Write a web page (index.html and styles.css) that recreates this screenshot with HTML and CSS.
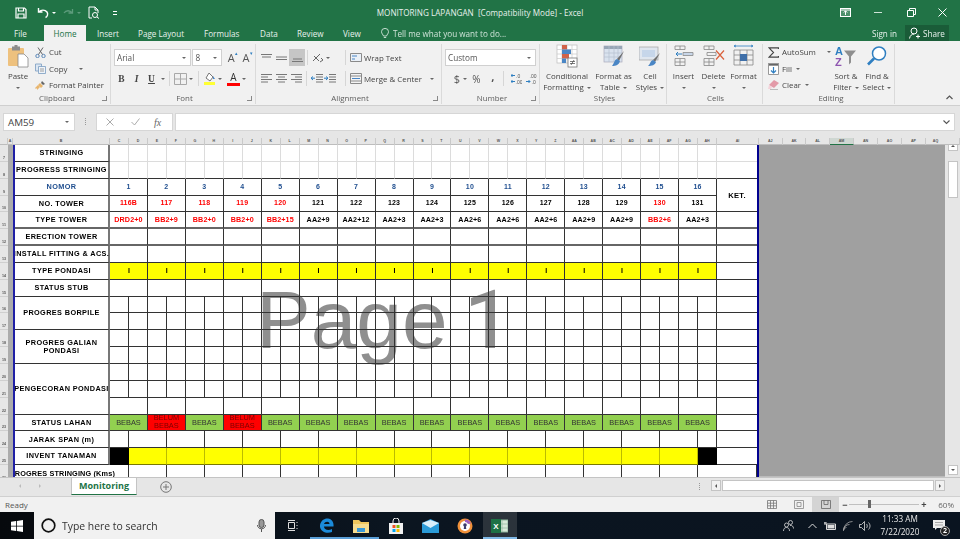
FILE: index.html
```html
<!DOCTYPE html>
<html lang="en">
<head>
<meta charset="utf-8">
<title>MONITORING LAPANGAN - Excel</title>
<link rel="stylesheet" href="styles.css">
</head>
<body>
<div class="app">
  <header class="titlebar">
    <div class="qat">
      <svg class="q1" width="12" height="12" viewBox="0 0 12 12" fill="none" stroke="#fff" stroke-width="1.2"><path d="M1 1h8.500L11 2.500V11H1z"/><path d="M3.500 1v3h5V1M3 11V7h6v4"/></svg>
      <svg class="q2" width="12" height="12" viewBox="0 0 12 12" fill="none" stroke="#fff" stroke-width="1.4"><path d="M1.500 1v4h4M1.800 5C4 2.500 8 2.500 10 5c1.300 2 .5 4.500-1.500 5.500"/></svg>
      <span class="qc"></span>
      <svg class="q3" width="12" height="12" viewBox="0 0 12 12" fill="none" stroke="#5d9c7c" stroke-width="1.3"><path d="M10.500 2v4h-4M10.200 6C8 3 4 3 2 6"/></svg>
      <span class="qc dim"></span>
      <svg class="q4" width="12" height="13" viewBox="0 0 12 13" fill="none" stroke="#fff" stroke-width="1"><path d="M1 12V1h6l3 3v3M7 1v3h3M1 12h3"/><circle cx="7" cy="9" r="2.500"/><path d="M9 11l2 1.500"/></svg>
      <span class="qd"></span>
    </div>
    <div class="doc-title">MONITORING LAPANGAN&nbsp; [Compatibility Mode] - Excel</div>
    <div class="winbtns">
      <svg width="11" height="9" viewBox="0 0 11 9" fill="none" stroke="#fff"><rect x=".5" y=".5" width="10" height="8" fill="#cfe3d8" fill-opacity=".25"/><path d="M5.500 7V3M3.800 4.500l1.700-1.700 1.700 1.700M.5 2h10"/></svg>
      <svg width="8" height="9" viewBox="0 0 8 9" stroke="#cfe3d8"><path d="M0 4.500h8"/></svg>
      <svg width="9" height="9" viewBox="0 0 9 9" fill="none" stroke="#fff"><path d="M.5 2.500h6v6h-6zM2.500 2.500v-2h6v6h-2"/></svg>
      <svg width="9" height="9" viewBox="0 0 9 9" stroke="#fff"><path d="M.5.500l8 8M8.500.500l-8 8"/></svg>
    </div>
  </header>

  <nav class="tabs">
    <span class="tab t-file">File</span>
    <span class="tab t-home">Home</span>
    <span class="tab t-ins">Insert</span>
    <span class="tab t-pl">Page Layout</span>
    <span class="tab t-fo">Formulas</span>
    <span class="tab t-da">Data</span>
    <span class="tab t-re">Review</span>
    <span class="tab t-vi">View</span>
    <svg class="bulb" width="8" height="11" viewBox="0 0 8 11" fill="none" stroke="#d5e6dc" stroke-width=".9"><path d="M2.500 8C2 6.500.5 5.500.5 3.700a3.500 3.300 0 017 0C7.500 5.500 6 6.500 5.500 8zM2.800 9.500h2.400"/></svg>
    <span class="tell">Tell me what you want to do...</span>
    <span class="signin">Sign in</span>
    <span class="share">
      <svg width="11" height="12" viewBox="0 0 11 12" fill="none" stroke="#fff"><circle cx="5" cy="4" r="3"/><path d="M.5 11.500C1 8.500 3 7 5 7M7 9.500h4M9 7.500v4"/></svg>
      Share
    </span>
  </nav>

  <section class="ribbon">
    <div class="group g-clip">
      <div class="gbody">
        <div class="big b-paste">
          <svg class="bigicon" width="22" height="22" viewBox="0 0 22 22"><rect x="1" y="3" width="16" height="18" rx="1" fill="#eec17e"/><rect x="5" y="1.500" width="8" height="4" fill="#8c8c8c"/><rect x="7.500" y="0" width="3" height="3" fill="#8c8c8c"/><path d="M11 9h6l4 4v9H11z" fill="#fff" stroke="#888" stroke-width=".8"/></svg>
          <span class="ln">Paste</span><span class="ln"><b class="car"></b></span>
        </div>
        <div class="smallcol">
          <div class="srow"><svg width="11" height="11" viewBox="0 0 11 11" fill="none" stroke="#5a87b8"><circle cx="2.500" cy="9" r="1.700"/><circle cx="8.500" cy="9" r="1.700"/><path d="M3.500 7.500L8 .5M7.500 7.500L3 .5" stroke="#666"/></svg>Cut</div>
          <div class="srow"><svg width="11" height="11" viewBox="0 0 11 11" fill="#dde7f2" stroke="#7a9cc0" stroke-width=".8"><path d="M.5 1h6v7h-6z"/><path d="M3.500 3.500h7v7h-7z" fill="#eef3f9"/><path d="M5 6h4M5 8h4" stroke="#888"/></svg>Copy<b class="car c-copy"></b></div>
          <div class="srow"><svg width="11" height="11" viewBox="0 0 11 11"><path d="M5 3l3 3-2 2-3-3z" fill="#e8b56d"/><path d="M7 1l3 3-2 1-2-2z" fill="#666"/><path d="M3 5L0 8l1 1 1-1 0 2 3-3z" fill="#e8b56d"/></svg>Format Painter</div>
        </div>
      </div>
      <div class="glabel">Clipboard<i class="launch"></i></div>
    </div>

    <div class="group g-font">
      <div class="gbody col">
        <div class="rrow">
          <span class="sel s-font">Arial<b class="car"></b></span>
          <span class="sel s-size">8<b class="car"></b></span>
          <span class="ab a1">A<sup>▴</sup></span><span class="ab a2">A<sup>▾</sup></span>
        </div>
        <div class="rrow">
          <span class="fb">B</span><span class="fb it">I</span><span class="fb un">U</span><span class="cw"><b class="car"></b></span><i class="sep sp1"></i>
          <svg class="i12" width="13" height="12" viewBox="0 0 13 12" fill="none" stroke="#a8a8a8"><path d="M.5.500h12v11H.5zM6.500.500v11M.5 6h12"/></svg><span class="cw"><b class="car"></b></span><i class="sep sp2"></i>
          <svg class="i12" width="13" height="13" viewBox="0 0 13 13"><path d="M6 1l4 4-3 4-4-3z" fill="#fff" stroke="#777"/><path d="M10 4l2 3h-2z" fill="#4a86c5"/><rect x="1" y="10" width="11" height="3" fill="#ffff33"/></svg><span class="cw"><b class="car"></b></span>
          <span class="colorA">A</span><span class="cw"><b class="car"></b></span>
        </div>
      </div>
      <div class="glabel">Font<i class="launch"></i></div>
    </div>

    <div class="group g-align">
      <div class="gbody col">
        <div class="rrow">
          <span class="al"><svg width="11" height="8" viewBox="0 0 11 8" stroke="#777"><path d="M0 .5h11M1 3h9"/></svg></span>
          <span class="al"><svg width="11" height="8" viewBox="0 0 11 8" stroke="#777"><path d="M0 3h11M0 5.500h11"/></svg></span>
          <span class="al on"><svg width="11" height="8" viewBox="0 0 11 8" stroke="#777"><path d="M1 5h9M0 7.500h11"/></svg></span>
          <i class="sep sp3"></i>
          <svg class="orient" width="12" height="11" viewBox="0 0 12 11" fill="none" stroke="#666"><path d="M1 9L8 2M2 4l5 5M9 6l2 2-3 2"/></svg><span class="cw"><b class="car"></b></span>
          <i class="sep sp4"></i>
          <span class="lnk"><svg width="12" height="11" viewBox="0 0 12 11" fill="#eaf0f7" stroke="#8a8a8a"><path d="M.5 1.500h11v8H.5z"/><path d="M2 4h5M2 7h3" stroke="#4a86c5"/></svg>Wrap Text</span>
        </div>
        <div class="rrow">
          <span class="al"><svg width="11" height="9" viewBox="0 0 11 9" stroke="#777"><path d="M0 .5h11M0 3h7M0 5.500h11M0 8h7"/></svg></span>
          <span class="al"><svg width="11" height="9" viewBox="0 0 11 9" stroke="#777"><path d="M0 .5h11M2 3h7M0 5.500h11M2 8h7"/></svg></span>
          <span class="al"><svg width="11" height="9" viewBox="0 0 11 9" stroke="#777"><path d="M0 .5h11M4 3h7M0 5.500h11M4 8h7"/></svg></span>
          <i class="sep sp3"></i>
          <svg class="ind" width="12" height="9" viewBox="0 0 12 9" stroke="#777"><path d="M5 .5h7M5 3h7M5 5.500h7M5 8h7"/><path d="M4 4.200H0M2 2.500L0 4.200 2 6" stroke="#2f7fc1" fill="none"/></svg>
          <svg class="ind" width="12" height="9" viewBox="0 0 12 9" stroke="#777"><path d="M5 .5h7M5 3h7M5 5.500h7M5 8h7"/><path d="M0 4.200h4M2 2.500l2 1.700L2 6" stroke="#2f7fc1" fill="none"/></svg>
          <i class="sep sp5"></i>
          <span class="lnk"><svg width="12" height="11" viewBox="0 0 12 11" fill="#f4f4f4" stroke="#8a8a8a"><path d="M.5.500h11v10H.5zM.5 3h11M.5 8h11"/><path d="M2 5.500h8" stroke="#4a86c5"/></svg>Merge &amp; Center<b class="car c-merge"></b></span>
        </div>
      </div>
      <div class="glabel">Alignment<i class="launch"></i></div>
    </div>

    <div class="group g-num">
      <div class="gbody col">
        <div class="rrow"><span class="sel s-num">Custom<b class="car"></b></span></div>
        <div class="rrow nrow">
          <span class="nb dollar">$</span><span class="cw"><b class="car"></b></span><span class="nb pct">%</span><span class="nb comma">,</span><i class="sep sp6"></i>
          <span class="dec"><svg width="11" height="11" viewBox="0 0 11 11" fill="none" stroke="#2f7fc1"><path d="M4 2.500H0M1.500 1L0 2.500 1.500 4M4 8.500H0M1.500 7L0 8.500 1.500 10"/><text x="5" y="4.500" class="dtx">.0</text><text x="4.500" y="10.500" class="dtx">.00</text></svg></span>
          <span class="dec"><svg width="11" height="11" viewBox="0 0 11 11" fill="none" stroke="#2f7fc1"><path d="M0 8.500h4M2.500 7L4 8.500 2.500 10"/><text x="3.500" y="4.500" class="dtx">.00</text><text x="5.500" y="10.500" class="dtx">.0</text></svg></span>
        </div>
      </div>
      <div class="glabel">Number<i class="launch"></i></div>
    </div>

    <div class="group g-styles">
      <div class="gbody">
        <div class="big w48">
          <svg class="bigicon" width="22" height="22" viewBox="0 0 22 22"><rect x="1" y="0" width="20" height="18" fill="#fff" stroke="#bbb" stroke-width=".7"/><path d="M1 4.500h20M1 9h20M1 13.500h20M6 0v18M11 0v18M16 0v18" stroke="#c8c8c8" stroke-width=".7"/><rect x="6" y="0" width="5" height="4.500" fill="#d16349"/><rect x="6" y="4.500" width="9" height="4.500" fill="#4a86c5"/><rect x="6" y="9" width="7" height="4.500" fill="#d16349"/><rect x="6" y="13.500" width="4" height="4.500" fill="#4a86c5"/><rect x="12" y="13" width="9" height="9" fill="#fff" stroke="#777" stroke-width=".8"/><path d="M14 16.500h5M14 18.500h5M18 15l-3 5" stroke="#444" stroke-width=".7"/></svg>
          <span class="ln">Conditional</span><span class="ln">Formatting<b class="car in"></b></span>
        </div>
        <div class="big w40">
          <svg class="bigicon" width="22" height="22" viewBox="0 0 22 22"><rect x="1" y="1" width="18" height="16" fill="#d9e2ee" stroke="#aab" stroke-width=".7"/><rect x="1" y="1" width="18" height="3" fill="#98a6b6"/><path d="M1 8h18M1 12h18M6 1v16M11 1v16M15 1v16" stroke="#b4c0cf" stroke-width=".7"/><path d="M21 6l-7 8 2 2z" fill="#6f6f6f"/><path d="M14 14c-3 1-2 3-5 7 4 0 7-1 8-5z" fill="#4a86c5"/></svg>
          <span class="ln">Format as</span><span class="ln">Table<b class="car in"></b></span>
        </div>
        <div class="big w30">
          <svg class="bigicon" width="22" height="22" viewBox="0 0 22 22"><rect x="0" y="2" width="19" height="13" fill="#dfe6ef" stroke="#aaa" stroke-width=".8"/><rect x="3" y="5" width="13" height="7" fill="#c6d6ea"/><path d="M21 8l-7 7 2 2z" fill="#6f6f6f"/><path d="M14 15c-3 1-2 3-5 6 4 0 7-1 8-4z" fill="#4a86c5"/></svg>
          <span class="ln">Cell</span><span class="ln">Styles<b class="car in"></b></span>
        </div>
      </div>
      <div class="glabel">Styles</div>
    </div>

    <div class="group g-cells">
      <div class="gbody">
        <div class="big w28">
          <svg class="bigicon" width="20" height="21" viewBox="0 0 20 21" fill="none" stroke="#888" stroke-width=".8"><path d="M1 .5h10v3.500H1zM6 .5v3.500M1 13h10v7H1zM1 16.500h10M6 13v7"/><path d="M9 7h10v3H9z" fill="#c8d6e8"/><path d="M8 8.500H2M4 6.500l-2 2 2 2" stroke="#2f7fc1" stroke-width="1"/></svg>
          <span class="ln">Insert</span><span class="ln"><b class="car"></b></span>
        </div>
        <div class="big w29">
          <svg class="bigicon" width="22" height="21" viewBox="0 0 22 21" fill="none" stroke="#888" stroke-width=".8"><path d="M1 .5h10v3.500H1zM6 .5v3.500M1 13h10v7H1zM1 16.500h10M6 13v7M4 7h9v3H4z"/><path d="M13 5l8 9M21 5l-8 9" stroke="#d9603b" stroke-width="1.200"/></svg>
          <span class="ln">Delete</span><span class="ln"><b class="car"></b></span>
        </div>
        <div class="big w29">
          <svg class="bigicon" width="21" height="22" viewBox="0 0 21 22" fill="none" stroke="#888" stroke-width=".8"><path d="M1 5h19v15H1zM1 10h19M1 15h19M7 5v15M14 5v15"/><rect x="7" y="9" width="7" height="7" fill="#3f6fa8" stroke="none"/><path d="M1 1h19M3 0l-2 1 2 1M18 0l2 1-2 1" stroke="#2f7fc1"/></svg>
          <span class="ln">Format</span><span class="ln"><b class="car"></b></span>
        </div>
      </div>
      <div class="glabel">Cells</div>
    </div>

    <div class="group g-edit">
      <div class="gbody">
        <div class="smallcol s-edit">
          <div class="srow"><svg width="11" height="11" viewBox="0 0 11 11" fill="none" stroke="#444" stroke-width="1.200"><path d="M10.500 2V.8H1L5.500 5.500 1 10.200h9.500V9"/></svg>AutoSum<b class="car c-sum"></b></div>
          <div class="srow"><svg width="11" height="12" viewBox="0 0 11 12" fill="#fff" stroke="#999"><path d="M.5.500h10v11H.5z"/><path d="M.5.500h10v2H.5z" fill="#666"/><path d="M5.500 4v6M3 7.500l2.500 2.500L8 7.500" stroke="#2f7fc1" fill="none" stroke-width="1.200"/></svg>Fill<b class="car in"></b></div>
          <div class="srow"><svg width="11" height="10" viewBox="0 0 11 10"><path d="M6 0l5 3-5 5-5-3z" fill="#e39aa8"/><path d="M1 5l3 2-1 2H0z" fill="#f4d3da"/><path d="M2 9.500h8" stroke="#bbb"/></svg>Clear<b class="car in"></b></div>
        </div>
        <div class="big w30 b-sort">
          <svg class="bigicon" width="22" height="21" viewBox="0 0 22 21"><text x="0" y="9" class="az1">A</text><text x="0" y="20" class="az2">Z</text><path d="M9 5h12l-5 6v6l-2 2v-8z" fill="#8f8f8f"/></svg>
          <span class="ln">Sort &amp;</span><span class="ln">Filter<b class="car in"></b></span>
        </div>
        <div class="big w30">
          <svg class="bigicon" width="22" height="21" viewBox="0 0 22 21" fill="none"><circle cx="13" cy="8" r="6.500" stroke="#2f7fc1" stroke-width="1.500" fill="#fff"/><path d="M8 13l-6 6" stroke="#2f7fc1" stroke-width="2.600"/></svg>
          <span class="ln">Find &amp;</span><span class="ln">Select<b class="car in"></b></span>
        </div>
      </div>
      <div class="glabel">Editing</div>
    </div>
    <div class="collapse"><svg width="7" height="5" viewBox="0 0 7 5" fill="none" stroke="#555" stroke-width="1.200"><path d="M.5 4l3-3 3 3"/></svg></div>
  </section>

  <section class="formula">
    <div class="namebox">AM59<b class="car"></b></div>
    <span class="fdots"></span>
    <div class="fxbox">
      <svg width="8" height="8" viewBox="0 0 8 8" stroke="#aaa" stroke-width="1"><path d="M.5.500l7 7M7.500.500l-7 7"/></svg>
      <svg width="9" height="8" viewBox="0 0 9 8" stroke="#aaa" fill="none" stroke-width="1"><path d="M.5 4l3 3 5-6.500"/></svg>
      <span class="fx">fx</span>
    </div>
    <div class="finput"><svg width="7" height="5" viewBox="0 0 7 5" fill="none" stroke="#555" stroke-width="1.100"><path d="M.5.500l3 3 3-3"/></svg></div>
  </section>

  <div class="colheads">
    <span class="corner"></span><span class="ch-a">A</span><span class="ch-b">B</span>
    <span>C</span><span>D</span><span>E</span><span>F</span><span>G</span><span>H</span><span>I</span><span>J</span>
    <span>K</span><span>L</span><span>M</span><span>N</span><span>O</span><span>P</span><span>Q</span><span>R</span>
    <span>S</span><span>T</span><span>U</span><span>V</span><span>W</span><span>X</span><span>Y</span><span>Z</span>
    <span>AA</span><span>AB</span><span>AC</span><span>AD</span><span>AE</span><span>AF</span><span>AG</span><span>AH</span>
    <span class="ch-ai">AI</span>
    <span class="ch-r">AJ</span><span class="ch-r">AK</span><span class="ch-r">AL</span><span class="ch-r sel-col">AM</span><span class="ch-r">AN</span><span class="ch-r">AO</span><span class="ch-r">AP</span><span class="ch-q">AQ</span>
    <span class="ch-sb"></span>
  </div>

  <main class="sheetarea">
    <div class="rowheads">
      <span>7</span><span>8</span><span>9</span><span>10</span><span>11</span><span>12</span><span>13</span><span>14</span><span>15</span><span>16</span>
      <span>17</span><span>18</span><span>19</span><span>20</span><span>21</span><span>22</span><span>23</span><span>24</span><span>25</span><span>26</span>
    </div>
    <div class="acol"></div>
    <div class="page">
      <div class="watermark">Page <span class="wm-one">1</span></div>
      <div class="sheet">
        <div class="row light"><b class="lab">STRINGING</b>
          <i></i><i></i><i></i><i></i><i></i><i></i><i></i><i></i><i></i><i></i><i></i><i></i><i></i><i></i><i></i><i></i>
          <i></i><i></i><i></i><i></i><i></i><i></i><i></i><i></i><i></i><i></i><i></i><i></i><i></i><i></i><i></i><i></i><i class="ket"></i></div>
        <div class="row light dk"><b class="lab">PROGRESS STRINGING</b>
          <i></i><i></i><i></i><i></i><i></i><i></i><i></i><i></i><i></i><i></i><i></i><i></i><i></i><i></i><i></i><i></i>
          <i></i><i></i><i></i><i></i><i></i><i></i><i></i><i></i><i></i><i></i><i></i><i></i><i></i><i></i><i></i><i></i><i class="ket"></i></div>
        <div class="row pair blue"><b class="lab">NOMOR</b>
          <i>1</i><i>2</i><i>3</i><i>4</i><i>5</i><i>6</i><i>7</i><i>8</i><i>9</i><i>10</i><i>11</i><i>12</i><i>13</i><i>14</i><i>15</i><i>16</i>
          <i class="ket ket-merged">KET.</i></div>
        <div class="row pair bold"><b class="lab">NO. TOWER</b>
          <i class="red">116B</i><i class="red">117</i><i class="red">118</i><i class="red">119</i><i class="red">120</i><i>121</i><i>122</i><i>123</i><i>124</i><i>125</i><i>126</i><i>127</i><i>128</i><i>129</i><i class="red">130</i><i>131</i></div>
        <div class="row pair bold wide thick"><b class="lab">TYPE TOWER</b>
          <i class="red">DRD2+0</i><i class="red">BB2+9</i><i class="red">BB2+0</i><i class="red">BB2+0</i><i class="red">BB2+15</i><i>AA2+9</i><i>AA2+12</i><i>AA2+3</i><i>AA2+3</i><i>AA2+6</i><i>AA2+6</i><i>AA2+6</i><i>AA2+9</i><i>AA2+9</i><i class="red">BB2+6</i><i>AA2+3</i><i class="ket"></i></div>
        <div class="row pair thick"><b class="lab">ERECTION TOWER</b>
          <i></i><i></i><i></i><i></i><i></i><i></i><i></i><i></i><i></i><i></i><i></i><i></i><i></i><i></i><i></i><i></i><i class="ket"></i></div>
        <div class="row pair"><b class="lab">INSTALL FITTING &amp; ACS.</b>
          <i></i><i></i><i></i><i></i><i></i><i></i><i></i><i></i><i></i><i></i><i></i><i></i><i></i><i></i><i></i><i></i><i class="ket"></i></div>
        <div class="row pair yellow bold"><b class="lab">TYPE PONDASI</b>
          <i>I</i><i>I</i><i>I</i><i>I</i><i>I</i><i>I</i><i>I</i><i>I</i><i>I</i><i>I</i><i>I</i><i>I</i><i>I</i><i>I</i><i>I</i><i>I</i><i class="ket"></i></div>
        <div class="row pair"><b class="lab">STATUS STUB</b>
          <i></i><i></i><i></i><i></i><i></i><i></i><i></i><i></i><i></i><i></i><i></i><i></i><i></i><i></i><i></i><i></i><i class="ket"></i></div>
        <div class="row"><b class="lab r2">PROGRES BORPILE</b>
          <i></i><i></i><i></i><i></i><i></i><i></i><i></i><i></i><i></i><i></i><i></i><i></i><i></i><i></i><i></i><i></i>
          <i></i><i></i><i></i><i></i><i></i><i></i><i></i><i></i><i></i><i></i><i></i><i></i><i></i><i></i><i></i><i></i><i class="ket"></i></div>
        <div class="row">
          <i></i><i></i><i></i><i></i><i></i><i></i><i></i><i></i><i></i><i></i><i></i><i></i><i></i><i></i><i></i><i></i>
          <i></i><i></i><i></i><i></i><i></i><i></i><i></i><i></i><i></i><i></i><i></i><i></i><i></i><i></i><i></i><i></i><i class="ket"></i></div>
        <div class="row"><b class="lab r2">PROGRES GALIAN<br>PONDASI</b>
          <i></i><i></i><i></i><i></i><i></i><i></i><i></i><i></i><i></i><i></i><i></i><i></i><i></i><i></i><i></i><i></i>
          <i></i><i></i><i></i><i></i><i></i><i></i><i></i><i></i><i></i><i></i><i></i><i></i><i></i><i></i><i></i><i></i><i class="ket"></i></div>
        <div class="row">
          <i></i><i></i><i></i><i></i><i></i><i></i><i></i><i></i><i></i><i></i><i></i><i></i><i></i><i></i><i></i><i></i>
          <i></i><i></i><i></i><i></i><i></i><i></i><i></i><i></i><i></i><i></i><i></i><i></i><i></i><i></i><i></i><i></i><i class="ket"></i></div>
        <div class="row"><b class="lab r3">PENGECORAN PONDASI</b>
          <i></i><i></i><i></i><i></i><i></i><i></i><i></i><i></i><i></i><i></i><i></i><i></i><i></i><i></i><i></i><i></i>
          <i></i><i></i><i></i><i></i><i></i><i></i><i></i><i></i><i></i><i></i><i></i><i></i><i></i><i></i><i></i><i></i><i class="ket"></i></div>
        <div class="row">
          <i></i><i></i><i></i><i></i><i></i><i></i><i></i><i></i><i></i><i></i><i></i><i></i><i></i><i></i><i></i><i></i>
          <i></i><i></i><i></i><i></i><i></i><i></i><i></i><i></i><i></i><i></i><i></i><i></i><i></i><i></i><i></i><i></i><i class="ket"></i></div>
        <div class="row pair">
          <i></i><i></i><i></i><i></i><i></i><i></i><i></i><i></i><i></i><i></i><i></i><i></i><i></i><i></i><i></i><i></i><i class="ket"></i></div>
        <div class="row pair lahan"><b class="lab">STATUS LAHAN</b>
          <i>BEBAS</i><i class="no">BELUM BEBAS</i><i>BEBAS</i><i class="no">BELUM BEBAS</i><i>BEBAS</i><i>BEBAS</i><i>BEBAS</i><i>BEBAS</i><i>BEBAS</i><i>BEBAS</i><i>BEBAS</i><i>BEBAS</i><i>BEBAS</i><i>BEBAS</i><i>BEBAS</i><i>BEBAS</i><i class="ket"></i></div>
        <div class="row off"><b class="lab">JARAK SPAN (m)</b>
          <i class="one"></i><i></i><i></i><i></i><i></i><i></i><i></i><i></i><i></i><i></i><i></i><i></i><i></i><i></i><i></i><i></i><i class="one"></i><i class="ket"></i></div>
        <div class="row off invent"><b class="lab">INVENT TANAMAN</b>
          <i class="one blk"></i><i></i><i></i><i></i><i></i><i></i><i></i><i></i><i></i><i></i><i></i><i></i><i></i><i></i><i></i><i></i><i class="one blk"></i><i class="ket"></i></div>
        <div class="row off"><b class="lab lab-over">PROGRES STRINGING (Kms)</b>
          <i></i><i></i><i></i><i></i><i></i><i></i><i></i><i></i><i></i><i></i><i></i><i></i><i></i><i></i><i></i><i></i><i class="one"></i><i class="ket"></i></div>
      </div>
    </div>
    <div class="outside"></div>
    <aside class="vscroll">
      <span class="sbtn"><b class="up"></b></span>
      <span class="vthumb"></span>
      <span class="sbtn btm"><b class="down"></b></span>
    </aside>
  </main>

  <div class="tabbar">
    <span class="nav"><b class="left"></b></span>
    <span class="nav"><b class="right"></b></span>
    <span class="sheettab">Monitoring</span>
    <svg class="plus" width="12" height="12" viewBox="0 0 12 12" fill="none" stroke="#777"><circle cx="6" cy="6" r="5.300"/><path d="M6 3v6M3 6h6"/></svg>
    <span class="tabdots"></span>
    <div class="hscroll">
      <span class="hbtn"><b class="left dk2"></b></span>
      <span class="hthumb"></span>
      <span class="hbtn"><b class="right dk2"></b></span>
    </div>
  </div>

  <footer class="statusbar">
    <span class="ready">Ready</span>
    <div class="views">
      <span class="vw"><svg width="10" height="9" viewBox="0 0 10 9" fill="none" stroke="#777" stroke-width=".8"><path d="M.5.500h9v8h-9zM.5 3.200h9M.5 5.800h9M3.500.500v8M6.500.500v8"/></svg></span>
      <span class="vw"><svg width="10" height="9" viewBox="0 0 10 9" fill="none" stroke="#888" stroke-width=".8"><path d="M.5.500h9v8h-9zM3 2.500h4v4H3z"/></svg></span>
      <span class="vw act"><svg width="10" height="9" viewBox="0 0 10 9" fill="none" stroke="#666" stroke-width=".8"><path d="M.5.500h9v8h-9zM3 .5v4h4v-4"/></svg></span>
    </div>
    <span class="zm">−</span>
    <span class="slider"><i class="thumb"></i></span>
    <span class="zm zp">+</span>
    <span class="pctz">60%</span>
  </footer>

  <div class="taskbar">
    <span class="start"><svg width="12" height="12" viewBox="0 0 12 12" fill="#fff"><path d="M0 1.700L5 1v4.700H0zM5.800.900L12 0v5.700H5.800zM0 6.400h5V11l-5-.7zM5.800 6.400H12V12l-6.200-.9z"/></svg></span>
    <div class="search">
      <svg width="15" height="15" viewBox="0 0 15 15" fill="none" stroke="#111" stroke-width="1.700"><circle cx="7.500" cy="7.500" r="6.300"/></svg>
      <span class="stext">Type here to search</span>
      <svg class="mic" width="9" height="13" viewBox="0 0 9 13" fill="none" stroke="#555"><rect x="2" y=".5" width="5" height="8" rx="2.500" fill="#999"/><path d="M.5 6c0 5 8 5 8 0M4.500 10v3"/></svg>
    </div>
    <div class="apps">
      <span class="app-i w35"><svg width="12" height="11" viewBox="0 0 12 11" fill="none" stroke="#ddd"><path d="M2.500 2.500h6v6h-6zM2 .5h7M2 10.500h7"/><path d="M11 2v1M11 5v1M11 8v1"/></svg></span>
      <span class="app-i w35 on"><svg width="15" height="15" viewBox="0 0 15 15"><path d="M1 7C2 2 6 0 9 .5c4 .5 6 4 5.500 8H5c0 3 4 4.500 8 2.500v3c-5 2-11 0-12-5 0-1 0-2 0-2zM5 6h5.500C10.500 3 6 3 5 6z" fill="#1b8ad9"/></svg></span>
      <span class="app-i w35 on"><svg width="16" height="14" viewBox="0 0 16 14"><path d="M0 1h6l2 2h8v11H0z" fill="#f0c75e"/><rect x="0" y="5" width="16" height="9" fill="#f7dd8f"/><rect x="4" y="9" width="8" height="4" fill="#3a9ad9"/></svg></span>
      <span class="app-i w35"><svg width="16" height="16" viewBox="0 0 16 16"><path d="M1 5h14v11H1z" fill="#f2f2f2"/><path d="M5 5V3a3 3 0 016 0v2" fill="none" stroke="#f2f2f2"/><rect x="4.500" y="7" width="3" height="3" fill="#f25022"/><rect x="8.500" y="7" width="3" height="3" fill="#7fba00"/><rect x="4.500" y="11" width="3" height="3" fill="#00a4ef"/><rect x="8.500" y="11" width="3" height="3" fill="#ffb900"/></svg></span>
      <span class="app-i w35"><svg width="17" height="14" viewBox="0 0 17 14"><path d="M0 4l8.500-4L17 4v10H0z" fill="#2a9bd8"/><path d="M0 4l8.500 5L17 4l-8.500-3z" fill="#d9effa"/></svg></span>
      <span class="app-i w35"><svg width="16" height="16" viewBox="0 0 16 16"><circle cx="8" cy="8" r="7.500" fill="#f0913a"/><circle cx="8" cy="8" r="5" fill="#fff"/><path d="M8 1.500a6.500 6.500 0 016 4L11 6a3.500 3.500 0 00-3-2z" fill="#a05fc0"/><circle cx="8" cy="7" r="1.800" fill="#3a3a6a"/><path d="M7.200 8h1.600l.5 3H6.700z" fill="#3a3a6a"/></svg></span>
      <span class="app-x"><svg width="17" height="14" viewBox="0 0 17 14"><rect x="6" y="1" width="11" height="12" fill="#d9ead9" stroke="#8fb59e"/><path d="M11 1v12M6 5h11M6 9h11" stroke="#8fb59e" stroke-width=".7"/><rect x="0" y="0" width="10" height="14" fill="#1e7145"/><text x="2.200" y="10" class="xl">X</text></svg></span>
    </div>
    <div class="tray">
      <svg class="t-ppl" width="11" height="11" viewBox="0 0 11 11" fill="none" stroke="#ddd" stroke-width=".8"><circle cx="3.500" cy="5" r="2"/><path d="M.5 11c0-2 1-3.500 3-3.500S6.500 9 6.500 11"/><circle cx="7.500" cy="2.500" r="2"/><path d="M7 5.500c2-.5 3.500 1 3.500 3"/></svg>
      <svg class="t-up" width="9" height="6" viewBox="0 0 9 6" fill="none" stroke="#ddd" stroke-width="1"><path d="M.5 5l4-4 4 4"/></svg>
      <svg class="t-bat" width="12" height="8" viewBox="0 0 12 8" fill="none" stroke="#ddd"><path d="M2.500 2h9v5.500h-9z"/><rect x="4" y="3.500" width="6" height="2.500" fill="#ddd"/><path d="M0 1h3M1 0v3"/></svg>
      <svg class="t-wifi" width="10" height="10" viewBox="0 0 10 10" fill="none" stroke="#aaa" stroke-width=".8"><path d="M.5 9.500a9 9 0 019-9M.5 9.500a6 6 0 016-6M.5 9.500a3 3 0 013-3"/></svg>
      <svg class="t-vol" width="12" height="10" viewBox="0 0 12 10" fill="none" stroke="#ddd" stroke-width=".8"><path d="M.5 3.500h2L5.500.5v9l-3-3h-2zM7.500 3c1 1 1 3 0 4M9.500 1.500c2 2 2 5 0 7"/></svg>
      <div class="clock"><span>11:33 AM</span><span>7/22/2020</span></div>
      <span class="action"><svg width="12" height="11" viewBox="0 0 12 11"><path d="M0 0h12v8H4L2 10V8H0z" fill="#eee"/><path d="M2 2.500h8M2 5h8" stroke="#888" stroke-width=".7"/></svg><i class="badge">2</i></span>
    </div>
  </div>
</div>
</body>
</html>
```
FILE: styles.css
```css
* { box-sizing: border-box; }
html, body { margin: 0; padding: 0; background: #e6e6e6; }
body { width: 960px; height: 539px; overflow: hidden; font-family: "Open Sans", "Liberation Sans", sans-serif; }
i, b { font-style: normal; }
.app { width: 960px; height: 539px; display: flex; flex-direction: column; overflow: hidden; filter: blur(.35px); }

/* title bar */
.titlebar { height: 25px; background: #217346; color: #e8f1ec; display: grid; grid-template-columns: 1fr auto 1fr; align-items: center; font-size: 8.150px; }
.qat { display: flex; align-items: center; padding-left: 15px; }
.q2 { margin-left: 10px; }
.qc { width: 0; height: 0; margin-left: 3px; border: 2px solid transparent; border-top: 2.500px solid #fff; border-bottom: 0; }
.qc.dim { border-top-color: #5d9c7c; }
.q3 { margin-left: 6px; }
.q4 { margin-left: 7px; }
.qd { width: 4px; height: 4px; margin-left: 13px; border-top: 1px solid #fff; border-bottom: 1px solid #fff; }
.doc-title { padding-bottom: 1px; }
.winbtns { display: flex; justify-content: flex-end; align-items: center; gap: 0; padding-right: 13px; }
.winbtns svg:nth-child(2) { margin-left: 23px; }
.winbtns svg:nth-child(3) { margin-left: 25px; }
.winbtns svg:nth-child(4) { margin-left: 22px; }

/* ribbon tabs */
.tabs { height: 16px; background: #217346; color: #e8f1ec; display: flex; align-items: center; font-size: 8.150px; position: relative; }
.tab { white-space: nowrap; }
.t-file { margin-left: 14px; width: 14px; }
.t-home { margin-left: 16px; width: 42px; height: 17px; align-self: flex-end; background: #f1f1f1; color: #217346; text-align: center; line-height: 17px; margin-bottom: -1px; }
.t-ins { margin-left: 11px; width: 21px; }
.t-pl { margin-left: 20px; width: 46px; }
.t-fo { margin-left: 20px; width: 35px; }
.t-da { margin-left: 21px; width: 17px; }
.t-re { margin-left: 20px; width: 27px; }
.t-vi { margin-left: 19px; width: 19px; }
.bulb { margin-left: 19px; }
.tell { margin-left: 4px; color: #cfe3d8; }
.signin { margin-left: auto; }
.share { margin-left: 8px; margin-right: 11px; width: 44px; height: 16px; background: #1a5c38; display: flex; align-items: center; justify-content: center; gap: 3px; }

/* ribbon */
.ribbon { height: 65px; background: #f1f1f1; border-bottom: 1px solid #cfcfcf; display: flex; color: #444; font-size: 7.900px; position: relative; }
.group { display: flex; flex-direction: column; border-right: 1px solid #dadada; margin: 3px 0 1px; height: 60px; }
.gbody { flex: 1; display: flex; min-height: 0; }
.gbody.col { flex-direction: column; gap: 4px; padding-top: 5px; }
.glabel { height: 11px; line-height: 11px; text-align: center; color: #5e5e5e; font-size: 7.900px; position: relative; }
.launch { position: absolute; right: 3px; top: 3px; width: 5px; height: 5px; border: 1px solid #888; border-width: 0 1px 1px 0; }
.g-clip { width: 111px; padding-left: 4px; }
.g-font { width: 145px; padding-left: 3px; }
.g-align { width: 186px; padding-left: 3px; }
.g-num { width: 98px; padding-left: 3px; }
.g-styles { width: 127px; padding-left: 3px; }
.g-cells { width: 96px; padding-left: 2px; }
.g-edit { width: 132px; padding-left: 5px; }
.big { width: 28px; display: flex; flex-direction: column; align-items: center; line-height: 11px; white-space: nowrap; flex: none; }
.bigicon { height: 24px; flex: none; margin-bottom: 3px; }
.ln { height: 11px; }
.w48 { width: 48px; }
.w40 { width: 41px; margin-left: 2px; }
.w30 { width: 30px; margin-left: 1px; }
.w28 { width: 29px; }
.w29 { width: 29px; margin-left: 1px; }
.car { display: inline-block; width: 0; height: 0; border: 2px solid transparent; border-top: 2.500px solid #666; border-bottom: 0; vertical-align: middle; }
.car.in { margin-left: 3px; }
.smallcol { margin-left: 3px; flex: none; }
.srow { height: 16.500px; display: flex; align-items: center; gap: 2px; white-space: nowrap; }
.srow svg { margin-right: 1px; flex: none; }
.c-copy { margin-left: 9px; }
.c-sum { margin-left: 9px; }
.srow .in { margin-left: 2px; }
.s-edit { width: 59px; margin-left: 0; }
.b-sort { margin-left: 4px; }
.b-sort + .big { margin-left: 1px; }
.rrow { height: 17px; display: flex; align-items: center; flex: none; }
.sel { background: #fff; border: 1px solid #d0d0d0; height: 17px; display: flex; align-items: center; justify-content: space-between; padding: 0 4px 0 2px; font-size: 8.200px; color: #555; }
.s-font { width: 78px; }
.s-size { width: 30px; margin-left: 1px; }
.s-num { width: 91px; }
.ab { font-size: 11px; color: #555; display: inline-flex; width: 15px; justify-content: center; }
.a1 { margin-left: 3px; }
.ab sup { font-size: 5px; color: #2f7fc1; line-height: 7px; height: 7px; }
.fb { width: 15px; text-align: center; font-family: "Liberation Serif", serif; font-weight: bold; font-size: 9.500px; color: #444; }
.it { font-style: italic; }
.un { text-decoration: underline; }
.cw { width: 8px; display: inline-flex; justify-content: center; flex: none; }
.sep { width: 1px; height: 15px; background: #d6d6d6; flex: none; }
.sp1 { margin: 0 4px 0 2px; }
.sp2 { margin: 0 4px 0 3px; }
.i12 { flex: none; }
.colorA { width: 13px; margin-left: 3px; font-size: 10px; line-height: 11px; height: 14px; text-align: center; color: #333; border-bottom: 3px solid #ff0000; }
.al { width: 15px; height: 17px; display: inline-flex; align-items: center; justify-content: center; flex: none; }
.al.on { background: #c6c6c6; width: 16px; }
.sp3 { margin: 0 4px 0 2px; }
.sp4 { margin: 0 4px 0 13px; }
.sp5 { margin: 0 4px 0 8px; }
.orient { flex: none; }
.ind { flex: none; margin-right: 1px; }
.lnk { display: inline-flex; align-items: center; gap: 2px; white-space: nowrap; }
.c-merge { margin-left: 6px; }
.nrow { padding-left: 8px; }
.nb { font-size: 11px; color: #555; text-align: center; }
.dollar { width: 8px; }
.pct { width: 14px; margin-left: 1px; font-size: 10px; }
.comma { width: 10px; margin-left: 5px; margin-bottom: 4px; font-weight: bold; }
.sp6 { margin: 0 5px; }
.dec { width: 16px; display: inline-flex; justify-content: center; }
.dtx { font: 5px "Liberation Sans", sans-serif; fill: #555; stroke: none; }
.az1 { font: bold 11px "Liberation Sans", sans-serif; fill: #2f7fc1; }
.az2 { font: bold 11px "Liberation Sans", sans-serif; fill: #8e55b0; }
.collapse { position: absolute; right: 7px; bottom: 3px; }

/* formula bar */
.formula { height: 32px; background: #e6e6e6; display: flex; padding: 7px 0 7px 3px; color: #444; flex: none; }
.namebox { width: 72px; background: #fff; border: 1px solid #d6d6d6; display: flex; align-items: center; justify-content: space-between; padding: 0 5px 0 4px; font-size: 9.800px; }
.fdots { width: 1px; height: 7px; margin: 5px 10px; border-left: 1px dotted #999; }
.fxbox { width: 77px; background: #fff; border: 1px solid #d6d6d6; display: flex; align-items: center; padding-left: 9px; }
.fxbox svg:nth-child(2) { margin-left: 17px; }
.fx { margin-left: 14px; font: italic 10px "Liberation Serif", serif; color: #666; }
.finput { width: 780px; margin-left: 2px; background: #fff; border: 1px solid #d6d6d6; display: flex; align-items: center; justify-content: flex-end; padding-right: 4px; }

/* column headers */
.colheads { height: 7px; background: #e6e6e6; display: grid; grid-template-columns: 8px 5px 97px repeat(32, 18.970px) 41.960px repeat(3, 23.700px) 24px repeat(3, 24px) 19px 15px; font: bold 3.600px/7px "Liberation Sans", sans-serif; color: #555; text-align: center; border-bottom: 1px solid #bdbdbd; flex: none; }
.colheads span { border-right: 1px solid #c9c9c9; overflow: hidden; }
.sel-col { background: #cfd7d2; border-bottom: 1px solid #217346; height: 7px; }
.ch-sb, .colheads .ch-q { border-right: 0; }

/* sheet */
.sheetarea { height: 332px; flex: none; display: flex; overflow: hidden; }
.rowheads { width: 8px; background: #e6e6e6; display: grid; grid-auto-rows: 16.850px; flex: none; font: bold 3.600px "Liberation Sans", sans-serif; color: #555; text-align: center; }
.rowheads span { display: flex; align-items: flex-end; justify-content: center; padding-bottom: 1px; border-bottom: 1px solid #cfcfcf; }
.acol { width: 5px; background: #acacac; flex: none; }
.page { width: 746px; flex: none; position: relative; background: #fff; border-left: 2px solid #1f1fa5; border-right: 2px solid #00008f; overflow: hidden; }
.watermark { position: absolute; left: 241px; top: 125px; font: 82px/100px "Liberation Sans", sans-serif; color: #8f8f8f; white-space: nowrap; }
.wm-one { font-family: Roboto, sans-serif; font-weight: 500; margin-left: -6px; }
.sheet { position: relative; display: grid; grid-template-columns: 95px repeat(32, 18.970px) 40px; grid-auto-rows: 16.850px; font: 7px "Liberation Sans", sans-serif; color: #000; }
.row { display: contents; }
.row > * { border-right: 1px solid #333; border-bottom: 1px solid #333; display: flex; align-items: center; justify-content: center; text-align: center; min-width: 0; }
.row > .lab { border-right: 2px solid #777; font-size: 7.300px; letter-spacing: .38px; white-space: nowrap; line-height: 8.400px; padding-top: 1px; }
.r2 { grid-row: span 2; }
.r3 { grid-row: span 3; }
.row > i { grid-column: span 1; }
.pair > i, .off > i { grid-column: span 2; }
.pair > i.ket, .off > i.ket, .row > i.ket { grid-column: 34; border-right: 0; }
.off > i.one { grid-column: span 1; }
.ket-merged { grid-row: span 2; font-size: 7.600px; font-weight: bold; letter-spacing: .3px; }
.light > i { border-color: #dcdcdc; }
.light > .lab { border-bottom-color: #333; }
.dk > i { border-bottom-color: #333; }
.light > i:nth-child(2n+1) { border-right-color: #dcdcdc; }
.blue > i:not(.ket) { color: #1f4e8f; font-weight: bold; letter-spacing: .2px; padding-bottom: 1px; }
.blue > .lab { color: #1f4e8f; }
.bold > i { font-weight: bold; letter-spacing: .2px; padding-bottom: 1px; }
.wide > i { letter-spacing: .1px; font-size: 7.200px; }
.bold > i.red { color: #ff0000; }
.thick > * { border-bottom: 2px solid #666; }
.yellow > i:not(.ket) { background: #ffff00; padding-left: 1px; }
.lahan > i:not(.ket) { background: #92d050; color: #333; font-size: 7.400px; }
.lahan > i.no { background: #ff0000; color: #7a0000; line-height: 8px; padding: 0 5px; }
.invent > i:not(.ket):not(.blk) { background: #ffff00; border-bottom-color: #7a7a00; border-right-color: #bcbc00; }
.invent > i.blk { background: #000; border-color: #000; }
.row > .lab-over { grid-column: span 2; overflow: hidden; border-right: 1px solid #333; justify-content: flex-end; border-bottom: 0; padding-right: 13px; letter-spacing: .15px; }
.outside { flex: 1; background: #a0a0a0; border-bottom: 1px solid #bbb; }
.vscroll { width: 15px; flex: none; background: #e6e6e6; display: flex; flex-direction: column; align-items: center; padding-top: 0; }
.sbtn { width: 10px; height: 10px; background: #fff; border: 1px solid #c4c4c4; display: flex; align-items: center; justify-content: center; flex: none; margin-top: -4px; }
.sbtn.btm { margin-top: auto; margin-bottom: 2px; }
.up, .down { width: 0; height: 0; border: 2.500px solid transparent; }
.up { border-bottom: 2.500px solid #555; border-top: 0; }
.down { border-top: 2.500px solid #555; border-bottom: 0; }
.vthumb { width: 10px; height: 37px; margin-top: 10px; background: #fff; border: 1px solid #c4c4c4; flex: none; }

/* sheet tabs */
.tabbar { height: 19px; background: #e6e6e6; display: flex; align-items: flex-start; border-top: 1px solid #c4c4c4; flex: none; }
.nav { width: 20px; height: 16px; display: flex; align-items: center; justify-content: center; }
.nav:first-child { margin-left: 10px; }
.left, .right { width: 0; height: 0; border: 2.500px solid transparent; }
.left { border-right: 2.500px solid #bbb; border-left: 0; }
.right { border-left: 2.500px solid #bbb; border-right: 0; }
.dk2 { border-left-color: #555; border-right-color: #555; }
.sheettab { margin-left: 21px; width: 66px; height: 17px; background: #fff; color: #217346; font-weight: bold; font-size: 9px; line-height: 15px; text-align: center; border-left: 1px solid #c4c4c4; border-right: 1px solid #c4c4c4; border-bottom: 1px solid #217346; }
.plus { margin: 3px 0 0 23px; }
.tabdots { width: 1px; height: 7px; margin: 5px 0 0 527px; border-left: 1px dotted #999; }
.hscroll { margin: 2px 0 0 11px; width: 234px; height: 11px; display: flex; gap: 1px; }
.hbtn { width: 10px; background: #f1f1f1; border: 1px solid #c4c4c4; display: flex; align-items: center; justify-content: center; flex: none; }
.hthumb { flex: 1; background: #fff; border: 1px solid #c4c4c4; }

/* status bar */
.statusbar { height: 16px; background: #f1f1f1; display: flex; align-items: center; font-size: 8px; color: #555; border-top: 1px solid #d0d0d0; flex: none; }
.ready { margin-left: 5px; }
.views { display: flex; margin-left: auto; height: 100%; }
.vw { width: 27px; display: flex; align-items: center; justify-content: center; }
.vw.act { background: #d4d4d4; }
.zm { font: bold 9px "Liberation Sans", sans-serif; margin-left: 3px; color: #444; width: 6px; }
.zm.zp { margin-left: 0; }
.slider { width: 70px; height: 1px; background: #c0c0c0; margin: 0 2px 0 1px; position: relative; }
.thumb { position: absolute; left: 19px; top: -4px; width: 3px; height: 8px; background: #666; }
.pctz { margin: 0 6px 0 11px; color: #666; }

/* taskbar */
.taskbar { flex: 1; background: linear-gradient(90deg, #06090d, #0b1520 40%, #0a1420); display: flex; align-items: center; color: #e8e8e8; min-height: 0; }
.start { width: 34px; display: flex; justify-content: center; flex: none; }
.search { width: 241px; height: 28px; background: #f1f1f1; display: flex; align-items: center; padding-left: 7px; flex: none; color: #333; font-size: 10.400px; }
.stext { margin-left: 6px; }
.mic { margin-left: auto; margin-right: 9px; }
.apps { display: flex; margin-left: 0; padding-left: 0; height: 100%; }
.app-i { width: 34.600px; height: 100%; display: flex; align-items: center; justify-content: center; flex: none; }
.app-i.on { box-shadow: inset 0 -2px 0 #5a9fd8; margin: 0 0; }
.app-x { width: 34px; height: 100%; background: #2b333b; display: flex; align-items: center; justify-content: center; box-shadow: inset 0 -2px 0 #7fb8e6; margin-left: 0; }
.xl { font: bold 8px "Liberation Sans", sans-serif; fill: #fff; }
.tray { margin-left: auto; display: flex; align-items: center; height: 100%; padding-right: 15px; }
.t-up { margin-left: 14px; }
.t-bat { margin-left: 7px; }
.t-wifi { margin-left: 7px; }
.t-vol { margin-left: 6px; }
.clock { margin-left: 7px; width: 44px; display: flex; flex-direction: column; align-items: center; font-size: 8.200px; line-height: 12.500px; }
.action { margin-left: 11px; position: relative; display: flex; }
.badge { position: absolute; right: -5px; bottom: -5px; width: 10px; height: 10px; border-radius: 50%; background: #222; border: 1px solid #aaa; color: #fff; font-size: 7px; font-weight: bold; line-height: 8px; text-align: center; }
```
